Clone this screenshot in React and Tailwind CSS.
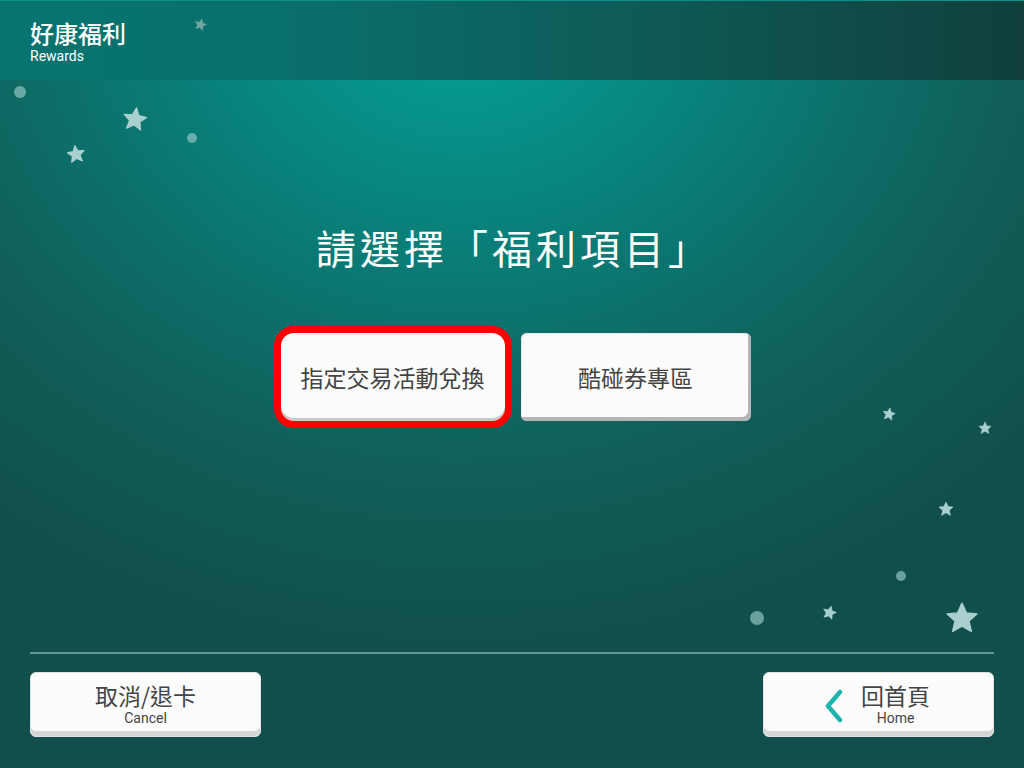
const Star = ({ x, y, size, color = "#a9d0cf", rot = 0 }) => (
    <svg
        className="absolute"
        style={{ left: x - size / 2, top: y - size / 2, transform: `rotate(${rot}deg)` }}
        width={size}
        height={size}
        viewBox="0 0 24 24"
    >
        <path
            d="M12 1.5l3.1 6.9 7.4.7-5.6 5 1.7 7.4L12 17.7l-6.6 3.8 1.7-7.4-5.6-5 7.4-.7z"
            fill={color}
            stroke={color}
            strokeWidth="1"
            strokeLinejoin="round"
        />
    </svg>
);

const Dot = ({ x, y, r }) => (
    <div
        className="absolute rounded-full bg-[#8fc4c1] opacity-70"
        style={{ left: x - r, top: y - r, width: r * 2, height: r * 2 }}
    />
);

const cjk = "font-['Noto_Sans_CJK_TC','Noto_Sans_CJK_SC',sans-serif]";
const latin = "font-['Roboto','Noto_Sans_CJK_TC',sans-serif]";

const App = () => {
    return (
        <div className={"relative w-[1024px] h-[768px] overflow-hidden flex flex-col bg-[radial-gradient(ellipse_75%_85%_at_45%_0%,#03a39c_0%,#0a7c76_40%,#10605b_70%,#114f4c_100%)] " + cjk}>
            {/* header */}
            <div className="h-[80px] flex-none border-t border-[#0c918a] bg-[linear-gradient(90deg,#077570_0%,#0a6f6b_30%,#0f5552_70%,#103f3c_100%)] pl-[30px] pt-[17px]">
                <div className="text-white text-[24px] leading-[30px] font-medium">好康福利</div>
                <div className={"text-white text-[14px] leading-[16px] " + latin}>Rewards</div>
            </div>

            {/* decorations */}
            <Star x={200} y={24} size={13} color="#6fa5a2" rot={15} />
            <Dot x={20} y={92} r={6} />
            <Star x={135} y={119} size={26} rot={8} />
            <Dot x={192} y={138} r={5} />
            <Star x={76} y={154} size={20} rot={-8} />
            <Star x={889} y={414} size={14} rot={10} />
            <Star x={985} y={428} size={14} />
            <Star x={946} y={509} size={16} />
            <Dot x={901} y={576} r={5} />
            <Dot x={757} y={618} r={7} />
            <Star x={829} y={612} size={15} rot={15} />
            <Star x={962} y={618} size={34} />

            {/* main */}
            <div className="flex-1 flex flex-col items-center pt-[143px]">
                <h1 className="text-white text-[40px] leading-[48px] tracking-[4px] pl-[4px] font-normal">請選擇「福利項目」</h1>

                <div className="mt-[55px] flex items-center gap-[9px]">
                    <button className="w-[238px] h-[102px] rounded-[20px] border-[7px] border-[#ff0000] bg-[#fcfcfc] text-[#444] text-[23px] shadow-[inset_0_-3px_0_#c9c9c9]">
                        指定交易活動兌換
                    </button>
                    <button className="w-[230px] h-[88px] rounded-[6px] bg-[#fcfcfc] text-[#444] text-[23px] shadow-[inset_-3px_-4px_0_#b5b5b5,inset_1px_1px_0_#e8e8e8]">
                        酷碰券專區
                    </button>
                </div>
            </div>

            {/* footer */}
            <div className="flex-none px-[30px] pb-[31px]">
                <div className="h-[2px] bg-[#5f9795]" />
                <div className="mt-[18px] flex justify-between">
                    <button className="w-[231px] h-[65px] rounded-[6px] bg-[#fcfcfc] border border-[#e2e2e2] shadow-[inset_0_-5px_0_#d6d6d6] flex flex-col items-center pt-[8px]">
                        <span className="text-[#444] text-[23px] leading-[28px]">取消/退卡</span>
                        <span className={"text-[#444] text-[14px] leading-[17px] mt-[1px] " + latin}>Cancel</span>
                    </button>
                    <button className="w-[231px] h-[65px] rounded-[6px] bg-[#fcfcfc] border border-[#e2e2e2] shadow-[inset_0_-5px_0_#d6d6d6] flex items-start justify-center gap-[18px] pt-[8px] pr-[4px]">
                        <svg width="20" height="34" viewBox="0 0 20 34" className="mt-[8px]">
                            <path d="M17 3L5 17l12 14" fill="none" stroke="#1db5ad" strokeWidth="4.5" strokeLinecap="round" strokeLinejoin="round" />
                        </svg>
                        <span className="flex flex-col items-center">
                            <span className="text-[#444] text-[23px] leading-[28px]">回首頁</span>
                            <span className={"text-[#444] text-[14px] leading-[17px] mt-[1px] " + latin}>Home</span>
                        </span>
                    </button>
                </div>
            </div>
        </div>
    );
};

export default App;
